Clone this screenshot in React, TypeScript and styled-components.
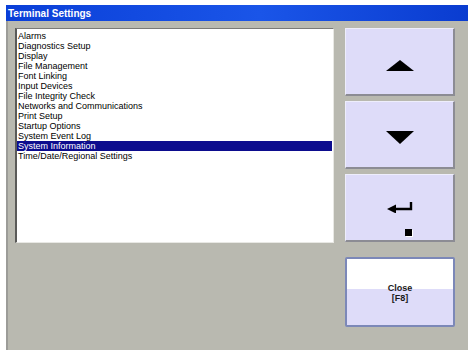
import React from "react";
import styled, { createGlobalStyle } from "styled-components";

const GlobalStyle = createGlobalStyle`
  html, body {
    margin: 0;
    padding: 0;
    background: #ffffff;
    font-family: "Liberation Sans", Arial, sans-serif;
  }
`;

const Page = styled.div`
  width: 474px;
  height: 356px;
  padding: 5px 6px 6px 6px;
  box-sizing: border-box;
`;

const Window = styled.div`
  display: flex;
  flex-direction: column;
  height: 100%;
  background: #b9b9b0;
  border-left: 2px solid #9c9c98;
  box-sizing: border-box;
`;

const TitleBar = styled.div`
  height: 16px;
  display: flex;
  align-items: center;
  padding-left: 2px;
  background: linear-gradient(90deg, #0a3fd8 0%, #1a55e8 55%, #0a3cd0 100%);
  color: #ffffff;
  font-size: 10px;
  font-weight: 700;
  margin-left: -2px;
`;

const Body = styled.div`
  flex: 1;
  display: grid;
  grid-template-columns: 319px 110px;
  column-gap: 11px;
  padding: 7px 13px 0 7px;
`;

const ListBox = styled.div`
  height: 215px;
  background: #ffffff;
  border-left: 2px solid #5a5a58;
  border-top: 1px solid #7a7a78;
  border-right: 1px solid #e8e8e4;
  border-bottom: 1px solid #e8e8e4;
  box-sizing: border-box;
  padding: 2px 1px 2px 0;
`;

const Item = styled.div<{ $selected?: boolean }>`
  height: 10px;
  line-height: 10px;
  font-size: 9px;
  padding-left: 1px;
  white-space: nowrap;
  color: ${(p) => (p.$selected ? "#ffffff" : "#000000")};
  background: ${(p) => (p.$selected ? "#0c0c8e" : "transparent")};
`;

const ButtonColumn = styled.div`
  display: flex;
  flex-direction: column;
  gap: 5px;
`;

const KeyButton = styled.div<{ $shift: number }>`
  position: relative;
  height: 68px;
  display: flex;
  align-items: center;
  justify-content: center;
  padding-top: ${(p) => p.$shift}px;
  background: #dedcf9;
  border-top: 1px solid #eeeefc;
  border-left: 1px solid #eeeefc;
  border-right: 2px solid #8c8c94;
  border-bottom: 2px solid #8c8c94;
  box-sizing: border-box;
`;

const CloseButton = styled.div`
  margin-top: 10px;
  height: 70px;
  display: flex;
  flex-direction: column;
  align-items: center;
  justify-content: center;
  border: 2px solid #7c88b8;
  border-radius: 2px;
  box-sizing: border-box;
  background: linear-gradient(180deg, #ffffff 0%, #ffffff 45%, #dedcf9 46%, #dedcf9 100%);
  font-size: 9px;
  font-weight: 700;
  line-height: 10px;
  color: #1a1a1a;
  padding-top: 1px;
`;

const Indicator = styled.span`
  position: absolute;
  right: 41px;
  bottom: 4px;
  width: 7px;
  height: 7px;
  background: #000000;
  box-shadow: 1px 1px 0 #ffffff;
`;

const items = [
  "Alarms",
  "Diagnostics Setup",
  "Display",
  "File Management",
  "Font Linking",
  "Input Devices",
  "File Integrity Check",
  "Networks and Communications",
  "Print Setup",
  "Startup Options",
  "System Event Log",
  "System Information",
  "Time/Date/Regional Settings",
];

export default function App() {
  return (
    <Page>
      <GlobalStyle />
      <Window>
        <TitleBar>Terminal Settings</TitleBar>
        <Body>
          <ListBox>
            {items.map((t) => (
              <Item key={t} $selected={t === "System Information"}>
                {t}
              </Item>
            ))}
          </ListBox>
          <ButtonColumn>
            <KeyButton $shift={8}>
              <svg width="28" height="11" viewBox="0 0 28 11">
                <polygon points="14,0 28,11 0,11" fill="#000" />
              </svg>
            </KeyButton>
            <KeyButton $shift={5}>
              <svg width="28" height="13" viewBox="0 0 28 13">
                <polygon points="0,0 28,0 14,13" fill="#000" />
              </svg>
            </KeyButton>
            <KeyButton $shift={0}>
              <svg width="26" height="11" viewBox="0 0 26 11">
                <path d="M24 0 V7 H7" fill="none" stroke="#000" strokeWidth="2.4" />
                <polygon points="0,7 9,2.5 9,11.5" fill="#000" />
              </svg>
              <Indicator />
            </KeyButton>
            <CloseButton>
              <span>Close</span>
              <span>[F8]</span>
            </CloseButton>
          </ButtonColumn>
        </Body>
      </Window>
    </Page>
  );
}
